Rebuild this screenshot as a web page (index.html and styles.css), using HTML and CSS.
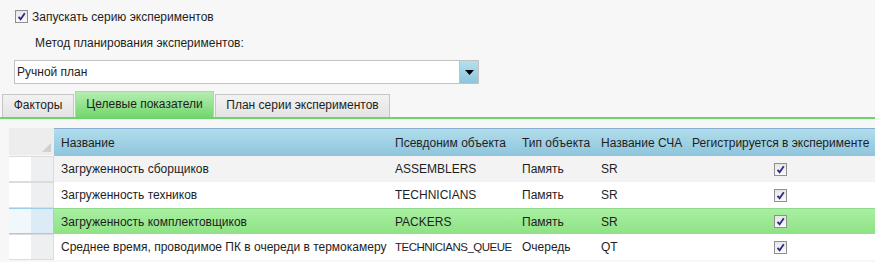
FILE: index.html
```html
<!DOCTYPE html>
<html lang="ru">
<head>
    <meta charset="UTF-8">
    <title>Серия экспериментов</title>
    <link rel="stylesheet" href="styles.css">
</head>
<body>
    <div class="panel">
        <label class="run-series">
            <span class="check"><svg viewBox="0 0 9 9"><path d="M1.5 4.8 L3.6 7.2 L7.8 1.2" /></svg></span>
            Запускать серию экспериментов
        </label>
        <div class="method-label">Метод планирования экспериментов:</div>
        <div class="combo">
            <span class="combo-text">Ручной план</span>
            <span class="combo-btn"><svg viewBox="0 0 9 5"><path d="M0 0 H9 L4.5 5 Z" /></svg></span>
        </div>
        <div class="tabs">
            <div class="tab first">Факторы</div>
            <div class="tab active">Целевые показатели</div>
            <div class="tab last">План серии экспериментов</div>
        </div>
        <div class="grid">
            <div class="row head">
                <div class="corner"><span class="tri"></span></div>
                <div class="cell">Название</div>
                <div class="cell">Псевдоним объекта</div>
                <div class="cell">Тип объекта</div>
                <div class="cell">Название СЧА</div>
                <div class="cell">Регистрируется в эксперименте</div>
            </div>
            <div class="row alt">
                <div class="rh"></div>
                <div class="cell">Загруженность сборщиков</div>
                <div class="cell">ASSEMBLERS</div>
                <div class="cell">Память</div>
                <div class="cell">SR</div>
                <div class="cell center"><span class="check"><svg viewBox="0 0 9 9"><path d="M1.5 4.8 L3.6 7.2 L7.8 1.2" /></svg></span></div>
            </div>
            <div class="row">
                <div class="rh"></div>
                <div class="cell">Загруженность техников</div>
                <div class="cell">TECHNICIANS</div>
                <div class="cell">Память</div>
                <div class="cell">SR</div>
                <div class="cell center"><span class="check"><svg viewBox="0 0 9 9"><path d="M1.5 4.8 L3.6 7.2 L7.8 1.2" /></svg></span></div>
            </div>
            <div class="row selected">
                <div class="rh"></div>
                <div class="cell">Загруженность комплектовщиков</div>
                <div class="cell">PACKERS</div>
                <div class="cell">Память</div>
                <div class="cell">SR</div>
                <div class="cell center"><span class="check"><svg viewBox="0 0 9 9"><path d="M1.5 4.8 L3.6 7.2 L7.8 1.2" /></svg></span></div>
            </div>
            <div class="row">
                <div class="rh"></div>
                <div class="cell">Среднее время, проводимое ПК в очереди в термокамеру</div>
                <div class="cell tight">TECHNICIANS_QUEUE</div>
                <div class="cell">Очередь</div>
                <div class="cell">QT</div>
                <div class="cell center"><span class="check"><svg viewBox="0 0 9 9"><path d="M1.5 4.8 L3.6 7.2 L7.8 1.2" /></svg></span></div>
            </div>
        </div>
    </div>
</body>
</html>
```

FILE: styles.css
```css
*{
    margin: 0;
    padding: 0;
    box-sizing: border-box;
}
body{
    font-family: "Liberation Sans", Arial, sans-serif;
    font-size: 12px;
    color: #1e1e1e;
    background: #f7f7f7;
    width: 875px;
    height: 262px;
    overflow: hidden;
}
.panel{
    padding-top: 8px;
}
.check{
    display: inline-block;
    width: 13px;
    height: 13px;
    border: 1px solid #8f8f8f;
    background: linear-gradient(to bottom, #e6e6e6, #fafafa);
    padding: 1px;
}
.check svg{
    display: block;
    width: 9px;
    height: 9px;
}
.check path{
    fill: none;
    stroke: #2a2a8c;
    stroke-width: 1.8;
}
.run-series{
    display: flex;
    align-items: center;
    gap: 4px;
    padding-left: 15px;
    height: 17px;
}
.method-label{
    padding-left: 35px;
    margin-top: 11px;
    height: 17px;
}
.combo{
    display: flex;
    margin: 7px 0 0 14px;
    width: 465px;
    height: 24px;
    border: 1px solid #c2c2c2;
    background: #fff;
}
.combo-text{
    flex: 1;
    padding: 4px 0 0 2px;
}
.combo-btn{
    width: 19px;
    display: flex;
    align-items: center;
    justify-content: center;
    border-left: 1px solid #c2c2c2;
    background: linear-gradient(to bottom, #b4e0ee, #8dc6dc);
}
.combo-btn svg{
    width: 9px;
    height: 5px;
}
.tabs{
    display: flex;
    align-items: flex-end;
    margin-top: 9px;
    padding-left: 2px;
    height: 26px;
    border-bottom: 2px solid #6cd46a;
}
.tab{
    height: 23px;
    padding-top: 3px;
    text-align: center;
    border: 1px solid #c6c6c6;
    border-bottom: none;
    margin-right: 1px;
    background: linear-gradient(to bottom, #f2f2f2, #e3e3e3);
}
.tab.first{
    width: 72px;
}
.tab.last{
    width: 175px;
}
.tab.active{
    width: 139px;
    height: 26px;
    padding-top: 5px;
    border-color: #a6dca2;
    background: linear-gradient(to bottom, #b6edb2, #74d76d);
}
.grid{
    margin: 9px 0 0 9px;
}
.row{
    display: grid;
    grid-template-columns: 45px 334px 127px 79px 91px 1fr;
    height: 26px;
    background: #fff;
}
.row.alt{
    background: #f3f3f3;
}
.row.selected{
    background: linear-gradient(to bottom, #a9efa3, #8ee284);
    border-top: 1px solid #8fd98a;
}
.row.head{
    height: 28px;
    background: linear-gradient(to bottom, #b0deec, #8ec4dc);
    border-top: 1px solid #87aed0;
}
.cell{
    padding-left: 7px;
    display: flex;
    align-items: center;
    white-space: nowrap;
    overflow: hidden;
}
.cell.tight{
    letter-spacing: -0.5px;
    font-size: 11.5px;
}
.cell.center{
    justify-content: center;
    padding-left: 0;
}
.corner{
    background: #ededed;
    position: relative;
    margin-top: -1px;
    border-bottom: 1px solid #f7f7f7;
}
.tri{
    position: absolute;
    right: 3px;
    bottom: 3px;
    width: 0;
    height: 0;
    border-left: 9px solid transparent;
    border-bottom: 9px solid #d0d0d0;
}
.rh{
    border: 1px solid #dcdcdc;
    border-left: none;
    background: linear-gradient(to right, #ffffff 50%, #eeeff1 50%);
}
.row.selected .rh{
    border-color: #9ccfe6;
    margin-top: -1px;
    background: linear-gradient(to right, #f0f8fc 50%, #dcecf6 50%);
}
```
